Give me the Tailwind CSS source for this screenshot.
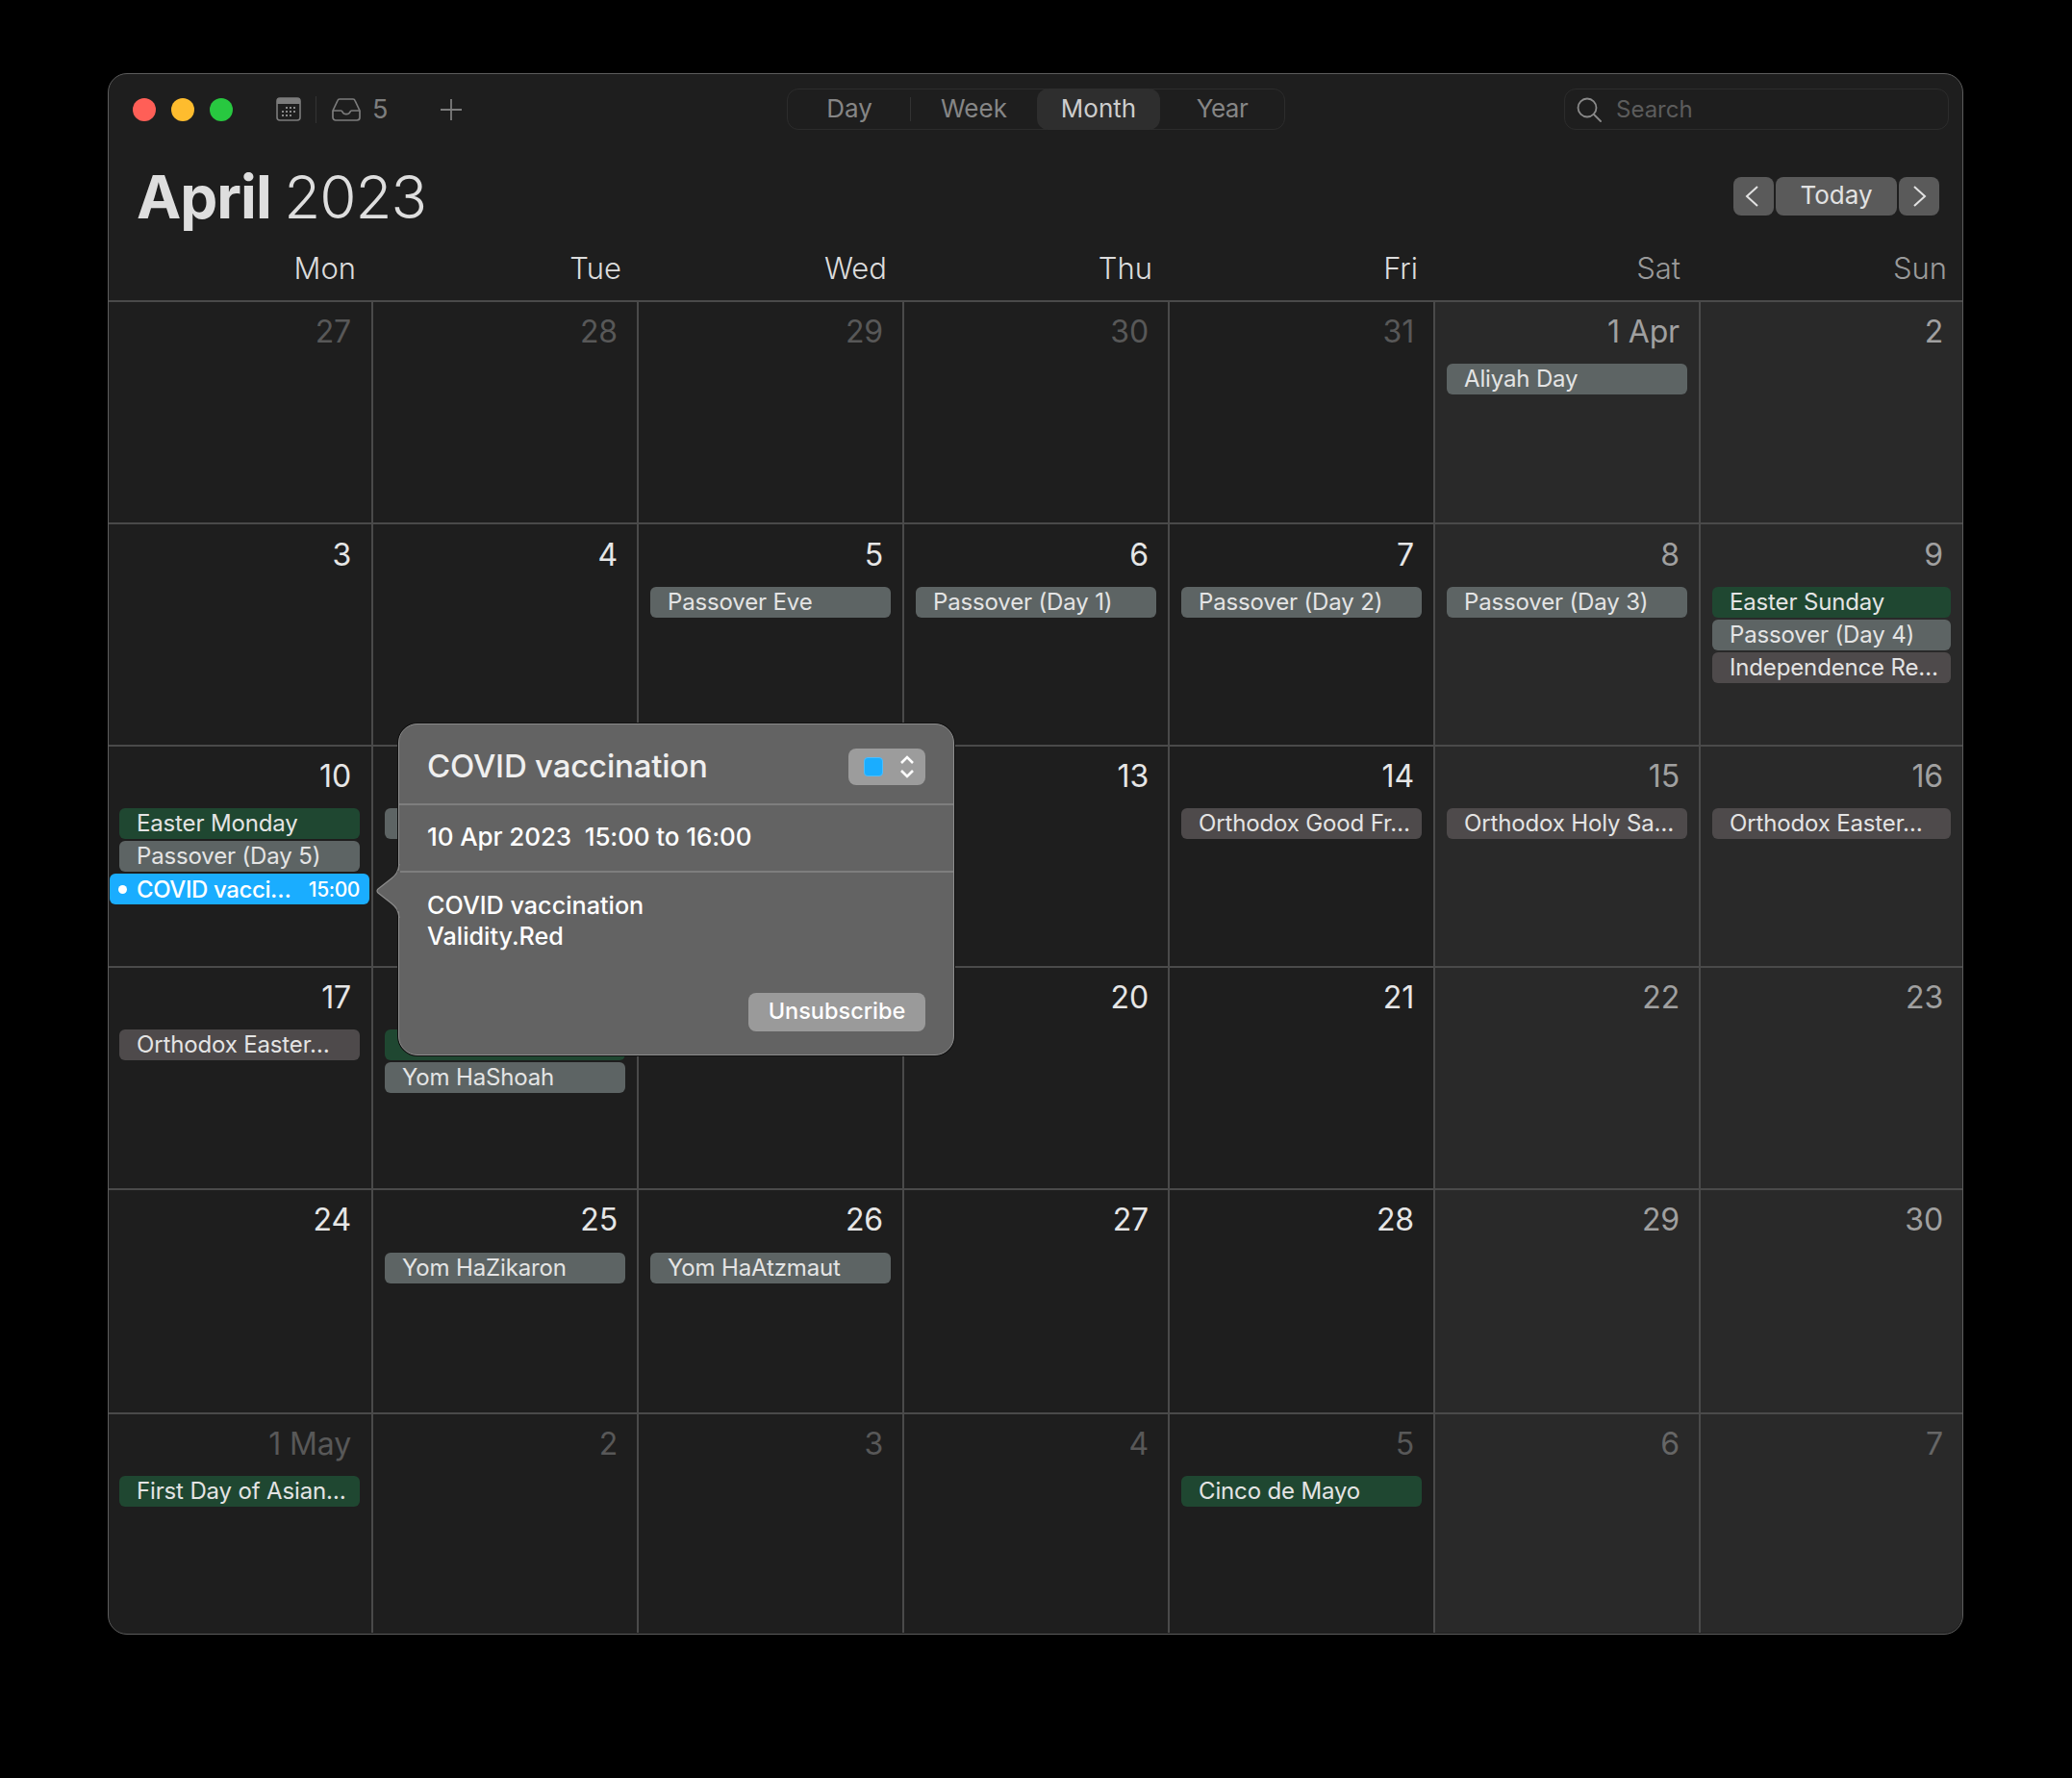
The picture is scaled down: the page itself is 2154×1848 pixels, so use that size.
<!DOCTYPE html>
<html>
<head>
    <meta charset="UTF-8">
    <title>Calendar</title>
    <script src="https://cdn.jsdelivr.net/npm/@tailwindcss/browser@4"></script>
</head>
<body class="bg-black min-h-screen pt-[76px] pl-[112px] [font-family:Inter,sans-serif]">
    <div class="relative w-[1929px] h-[1623px] bg-[#1e1e1e] border border-[#5c5c5c] rounded-[20px]">
        <!-- Toolbar -->
        <div class="grid grid-cols-[705px_518px_1fr] h-[73px] items-center">
            <div class="flex items-center pl-[25px]">
                <span class="w-6 h-6 rounded-full bg-[#ff5f57]"></span>
                <span class="w-6 h-6 rounded-full bg-[#febc2e] ml-4"></span>
                <span class="w-6 h-6 rounded-full bg-[#28c840] ml-4"></span>
                <svg class="ml-[45px]" width="26" height="25" viewBox="0 0 26 25">
                    <rect x="1" y="1" width="24" height="23" rx="3" fill="none" stroke="#7c7c7c" stroke-width="1.6"/>
                    <path d="M1 4a3 3 0 0 1 3-3h18a3 3 0 0 1 3 3v3H1z" fill="#7c7c7c"/>
                    <g fill="#8a8a8a">
                        <rect x="10" y="10" width="2" height="2"/><rect x="14" y="10" width="2" height="2"/><rect x="18" y="10" width="2" height="2"/>
                        <rect x="6" y="14" width="2" height="2"/><rect x="10" y="14" width="2" height="2"/><rect x="14" y="14" width="2" height="2"/><rect x="18" y="14" width="2" height="2"/>
                        <rect x="6" y="18" width="2" height="2"/><rect x="10" y="18" width="2" height="2"/><rect x="14" y="18" width="2" height="2"/>
                    </g>
                </svg>
                <span class="w-px h-7 bg-[#333] ml-[15px]"></span>
                <svg class="ml-[16px]" width="30" height="24" viewBox="0 0 30 24" fill="none" stroke="#7c7c7c" stroke-width="1.7" stroke-linejoin="round">
                    <path d="M1 13 6 2.500Q6.500 1 8 1h14q1.500 0 2 1.500L29 13v7a3 3 0 0 1-3 3H4a3 3 0 0 1-3-3z"/>
                    <path d="M1 13h8.500c1 0 1.200 .6 1.500 1.300.6 1.500 2 2.400 4 2.400s3.400-.9 4-2.400c.3-.7 .5-1.300 1.500-1.300H29"/>
                </svg>
                <span class="ml-3 text-[27px] leading-none text-[#7e7e7e]">5</span>
                <svg class="ml-[55px]" width="22" height="22" viewBox="0 0 22 22" stroke="#7c7c7c" stroke-width="1.8"><path d="M11 0v22M0 11h22"/></svg>
            </div>
            <div class="flex h-[43px] border border-[#2c2c2c] rounded-xl text-[26px] leading-[39px] text-center text-[#868686]">
                <span class="w-[128px] relative">Day<span class="absolute right-0 top-2 w-px h-[25px] bg-[#333]"></span></span>
                <span class="w-[131px]">Week</span>
                <span class="w-[128px] bg-[#2e2e2e] rounded-xl text-[#cdcdcd] -my-px leading-[41px]">Month</span>
                <span class="flex-1 tracking-[-0.5px]">Year</span>
            </div>
            <div class="flex justify-end pr-[14px]">
                <div class="flex items-center w-[400px] h-[43px] border border-[#2c2c2c] rounded-xl pl-[12px] text-[24px] text-[#5c5c5c]">
                    <svg width="26" height="26" viewBox="0 0 26 26" fill="none" stroke="#8a8a8a" stroke-width="1.8" stroke-linecap="round"><circle cx="11" cy="11" r="9.500"/><path d="m18 18 7 7"/></svg>
                    <span class="ml-[15px]">Search</span>
                </div>
            </div>
        </div>

        <!-- Title -->
        <div class="flex items-start justify-between h-[108px]">
            <h1 class="pl-[29px] pt-[17px] text-[62px] leading-[76px] text-[#dedede] font-light tracking-[-1px] [word-spacing:-3px]"><b class="font-bold">April</b> 2023</h1>
            <div class="flex gap-[2px] mt-[34px] mr-[24px] text-[26px] text-[#e2e2e2]">
                <span class="flex items-center justify-center w-[42px] h-10 rounded-lg bg-[#5a5a5a] pr-[4px]"><svg width="14" height="22" viewBox="0 0 14 22" fill="none" stroke="#e2e2e2" stroke-width="2"><path d="M13 1 2 11l11 10"/></svg></span>
                <span class="w-[126px] h-10 rounded-lg bg-[#5a5a5a] text-center leading-[38px]">Today</span>
                <span class="flex items-center justify-center w-[42px] h-10 rounded-lg bg-[#5a5a5a] pl-[2px]"><svg width="14" height="22" viewBox="0 0 14 22" fill="none" stroke="#e2e2e2" stroke-width="2"><path d="m1 1 11 10L1 21"/></svg></span>
            </div>
        </div>

        <!-- Weekdays -->
        <div class="grid grid-cols-[273px_repeat(5,276px)_274px] h-[54px] text-right text-[31px] font-light leading-[42px] text-[#dcdcdc]">
            <div class="pr-[16px]">Mon</div>
            <div class="pr-[16px]">Tue</div>
            <div class="pr-[16px]">Wed</div>
            <div class="pr-[16px]">Thu</div>
            <div class="pr-[16px]">Fri</div>
            <div class="pr-[19px] text-[#9a9a9a]">Sat</div>
            <div class="pr-[16px] text-[#9a9a9a]">Sun</div>
        </div>

        <!-- Month grid -->
        <div class="grid grid-cols-[273px_repeat(5,276px)_274px] grid-rows-[231px_231px_230px_231px_233px_229px] text-[32px] leading-[62px] tracking-[-0.15px] text-right text-[#e6e6e6] overflow-hidden rounded-b-[19px]">
            <!-- Week 1 -->
            <div class="border-t-2 border-[#4a4a4a] pr-[21px] text-[#585858]"><p class="h-[64px]">27</p></div>
            <div class="border-t-2 border-l-2 border-[#4a4a4a] pr-[20px] text-[#585858]"><p class="h-[64px]">28</p></div>
            <div class="border-t-2 border-l-2 border-[#4a4a4a] pr-[20px] text-[#585858]"><p class="h-[64px]">29</p></div>
            <div class="border-t-2 border-l-2 border-[#4a4a4a] pr-[20px] text-[#585858]"><p class="h-[64px]">30</p></div>
            <div class="border-t-2 border-l-2 border-[#4a4a4a] pr-[20px] text-[#585858]"><p class="h-[64px]">31</p></div>
            <div class="border-t-2 border-l-2 border-[#4a4a4a] pr-[20px] bg-[#292929] text-[#a0a0a0]"><p class="h-[64px]">1 Apr</p>
                <div class="-mr-[8px] ml-[12px] h-8 rounded-md bg-[#5d6464] text-left text-[24px] leading-[31px] text-[#e4e4e4] pl-[18px]">Aliyah Day</div>
            </div>
            <div class="border-t-2 border-l-2 border-[#4a4a4a] pr-[20px] bg-[#292929] text-[#a0a0a0]"><p class="h-[64px]">2</p></div>

            <!-- Week 2 -->
            <div class="border-t-2 border-[#4a4a4a] pr-[21px]"><p class="h-[64px] leading-[64px]">3</p></div>
            <div class="border-t-2 border-l-2 border-[#4a4a4a] pr-[20px]"><p class="h-[64px] leading-[64px]">4</p></div>
            <div class="border-t-2 border-l-2 border-[#4a4a4a] pr-[20px]"><p class="h-[65px] leading-[64px]">5</p>
                <div class="-mr-[8px] ml-[12px] h-8 rounded-md bg-[#5d6464] text-left text-[24px] leading-[31px] text-[#e4e4e4] pl-[18px]">Passover Eve</div>
            </div>
            <div class="border-t-2 border-l-2 border-[#4a4a4a] pr-[20px]"><p class="h-[65px] leading-[64px]">6</p>
                <div class="-mr-[8px] ml-[12px] h-8 rounded-md bg-[#5d6464] text-left text-[24px] leading-[31px] text-[#e4e4e4] pl-[18px]">Passover (Day 1)</div>
            </div>
            <div class="border-t-2 border-l-2 border-[#4a4a4a] pr-[20px]"><p class="h-[65px] leading-[64px]">7</p>
                <div class="-mr-[8px] ml-[12px] h-8 rounded-md bg-[#5d6464] text-left text-[24px] leading-[31px] text-[#e4e4e4] pl-[18px]">Passover (Day 2)</div>
            </div>
            <div class="border-t-2 border-l-2 border-[#4a4a4a] pr-[20px] bg-[#292929] text-[#a0a0a0]"><p class="h-[65px] leading-[64px]">8</p>
                <div class="-mr-[8px] ml-[12px] h-8 rounded-md bg-[#5d6464] text-left text-[24px] leading-[31px] text-[#e4e4e4] pl-[18px]">Passover (Day 3)</div>
            </div>
            <div class="border-t-2 border-l-2 border-[#4a4a4a] pr-[20px] bg-[#292929] text-[#a0a0a0]"><p class="h-[65px] leading-[64px]">9</p>
                <div class="flex flex-col gap-[2px] -mr-[8px] ml-[12px] text-left text-[24px] leading-[31px] text-[#e4e4e4]">
                    <div class="h-8 rounded-md bg-[#1f4731] pl-[18px]">Easter Sunday</div>
                    <div class="h-8 rounded-md bg-[#5d6464] pl-[18px]">Passover (Day 4)</div>
                    <div class="h-8 rounded-md bg-[#4e4a4b] pl-[18px]">Independence Re…</div>
                </div>
            </div>

            <!-- Week 3 -->
            <div class="border-t-2 border-[#4a4a4a] pr-[21px]"><p class="h-[64px]">10</p>
                <div class="flex flex-col gap-[2px] -mr-[9px] ml-[11px] text-left text-[24px] leading-[31px] text-[#e4e4e4]">
                    <div class="h-8 rounded-md bg-[#1f4731] pl-[18px]">Easter Monday</div>
                    <div class="h-8 rounded-md bg-[#5d6464] pl-[18px]">Passover (Day 5)</div>
                    <div class="flex items-center justify-between h-8 rounded-md bg-[#1aadff] text-white font-medium tracking-[-0.4px] -ml-[10px] -mr-[10px] pl-[9px] pr-[10px]">
                        <span class="flex items-center"><span class="w-[9px] h-[9px] rounded-full bg-white mr-[10px]"></span>COVID vacci…</span>
                        <span class="text-[21px]">15:00</span>
                    </div>
                </div>
            </div>
            <div class="border-t-2 border-l-2 border-[#4a4a4a] pr-[20px]"><div class="h-[64px]"></div>
                <div class="-mr-[8px] ml-[12px] h-8 rounded-md bg-[#5d6464]"></div>
            </div>
            <div class="border-t-2 border-l-2 border-[#4a4a4a] pr-[20px]"></div>
            <div class="border-t-2 border-l-2 border-[#4a4a4a] pr-[20px]"><p class="h-[64px]">13</p></div>
            <div class="border-t-2 border-l-2 border-[#4a4a4a] pr-[20px]"><p class="h-[64px]">14</p>
                <div class="-mr-[8px] ml-[12px] h-8 rounded-md bg-[#4e4a4b] text-left text-[24px] leading-[31px] text-[#e4e4e4] pl-[18px]">Orthodox Good Fr…</div>
            </div>
            <div class="border-t-2 border-l-2 border-[#4a4a4a] pr-[20px] bg-[#292929] text-[#a0a0a0]"><p class="h-[64px]">15</p>
                <div class="-mr-[8px] ml-[12px] h-8 rounded-md bg-[#4e4a4b] text-left text-[24px] leading-[31px] text-[#e4e4e4] pl-[18px]">Orthodox Holy Sa…</div>
            </div>
            <div class="border-t-2 border-l-2 border-[#4a4a4a] pr-[20px] bg-[#292929] text-[#a0a0a0]"><p class="h-[64px]">16</p>
                <div class="-mr-[8px] ml-[12px] h-8 rounded-md bg-[#4e4a4b] text-left text-[24px] leading-[31px] text-[#e4e4e4] pl-[18px]">Orthodox Easter…</div>
            </div>

            <!-- Week 4 -->
            <div class="border-t-2 border-[#4a4a4a] pr-[21px]"><p class="h-[64px]">17</p>
                <div class="-mr-[9px] ml-[11px] h-8 rounded-md bg-[#4e4a4b] text-left text-[24px] leading-[31px] text-[#e4e4e4] pl-[18px]">Orthodox Easter…</div>
            </div>
            <div class="border-t-2 border-l-2 border-[#4a4a4a] pr-[20px]"><div class="h-[64px]"></div>
                <div class="flex flex-col gap-[2px] -mr-[8px] ml-[12px] text-left text-[24px] leading-[31px] text-[#e4e4e4]">
                    <div class="h-8 rounded-md bg-[#1f4731]"></div>
                    <div class="h-8 rounded-md bg-[#5d6464] pl-[18px]">Yom HaShoah</div>
                </div>
            </div>
            <div class="border-t-2 border-l-2 border-[#4a4a4a] pr-[20px]"></div>
            <div class="border-t-2 border-l-2 border-[#4a4a4a] pr-[20px]"><p class="h-[64px]">20</p></div>
            <div class="border-t-2 border-l-2 border-[#4a4a4a] pr-[20px]"><p class="h-[64px]">21</p></div>
            <div class="border-t-2 border-l-2 border-[#4a4a4a] pr-[20px] bg-[#292929] text-[#a0a0a0]"><p class="h-[64px]">22</p></div>
            <div class="border-t-2 border-l-2 border-[#4a4a4a] pr-[20px] bg-[#292929] text-[#a0a0a0]"><p class="h-[64px]">23</p></div>

            <!-- Week 5 -->
            <div class="border-t-2 border-[#4a4a4a] pr-[21px]"><p class="h-[64px]">24</p></div>
            <div class="border-t-2 border-l-2 border-[#4a4a4a] pr-[20px]"><p class="h-[65px]">25</p>
                <div class="-mr-[8px] ml-[12px] h-8 rounded-md bg-[#5d6464] text-left text-[24px] leading-[31px] text-[#e4e4e4] pl-[18px]">Yom HaZikaron</div>
            </div>
            <div class="border-t-2 border-l-2 border-[#4a4a4a] pr-[20px]"><p class="h-[65px]">26</p>
                <div class="-mr-[8px] ml-[12px] h-8 rounded-md bg-[#5d6464] text-left text-[24px] leading-[31px] text-[#e4e4e4] pl-[18px]">Yom HaAtzmaut</div>
            </div>
            <div class="border-t-2 border-l-2 border-[#4a4a4a] pr-[20px]"><p class="h-[64px]">27</p></div>
            <div class="border-t-2 border-l-2 border-[#4a4a4a] pr-[20px]"><p class="h-[64px]">28</p></div>
            <div class="border-t-2 border-l-2 border-[#4a4a4a] pr-[20px] bg-[#292929] text-[#a0a0a0]"><p class="h-[64px]">29</p></div>
            <div class="border-t-2 border-l-2 border-[#4a4a4a] pr-[20px] bg-[#292929] text-[#a0a0a0]"><p class="h-[64px]">30</p></div>

            <!-- Week 6 -->
            <div class="border-t-2 border-[#4a4a4a] pr-[21px] text-[#585858]"><p class="h-[64px]">1 May</p>
                <div class="-mr-[9px] ml-[11px] h-8 rounded-md bg-[#1f4731] text-left text-[24px] leading-[31px] text-[#e4e4e4] pl-[18px]">First Day of Asian…</div>
            </div>
            <div class="border-t-2 border-l-2 border-[#4a4a4a] pr-[20px] text-[#585858]"><p class="h-[64px]">2</p></div>
            <div class="border-t-2 border-l-2 border-[#4a4a4a] pr-[20px] text-[#585858]"><p class="h-[64px]">3</p></div>
            <div class="border-t-2 border-l-2 border-[#4a4a4a] pr-[20px] text-[#585858]"><p class="h-[64px]">4</p></div>
            <div class="border-t-2 border-l-2 border-[#4a4a4a] pr-[20px] text-[#585858]"><p class="h-[64px]">5</p>
                <div class="-mr-[8px] ml-[12px] h-8 rounded-md bg-[#1f4731] text-left text-[24px] leading-[31px] text-[#e4e4e4] pl-[18px]">Cinco de Mayo</div>
            </div>
            <div class="border-t-2 border-l-2 border-[#4a4a4a] pr-[20px] bg-[#292929] text-[#666666]"><p class="h-[64px]">6</p></div>
            <div class="border-t-2 border-l-2 border-[#4a4a4a] pr-[20px] bg-[#292929] text-[#666666]"><p class="h-[64px]">7</p></div>
        </div>

        <!-- Event popover -->
        <div class="absolute left-[301px] top-[675px] w-[578px] h-[345px] flex flex-col bg-[#636363] border border-[#8c8c8c] rounded-[20px] shadow-[0_0_0_1px_#111] text-white">
            <svg class="absolute left-[-24px] top-[145px]" width="26" height="56" viewBox="0 0 26 56">
                <path d="M25 0C24 8 21 11 16 15L2 26q-2 2 0 4l14 11c5 4 8 7 9 15z" fill="#636363"/>
                <path d="M24 0C23 8 21 11 16 15L2 26q-2 2 0 4l14 11c5 4 7 7 8 15" fill="none" stroke="#8c8c8c" stroke-width="1.200"/>
            </svg>
            <div class="flex items-center justify-between h-[84px] pt-[6px] pl-[29px] pr-[29px] border-b-2 border-[#7e7e7e]">
                <span class="text-[33px] font-medium tracking-[-0.2px] text-[#efefef]">COVID vaccination</span>
                <span class="flex items-center w-[80px] h-[38px] rounded-lg bg-[#9c9c9c] pl-4">
                    <span class="w-[20px] h-[20px] rounded-[4px] bg-[#1aadff] border border-[#4dbdff]"></span>
                    <svg class="ml-[17px]" width="16" height="24" viewBox="0 0 16 24" fill="none" stroke="#fff" stroke-width="2.600"><path d="m2 8 6-6 6 6M2 16l6 6 6-6"/></svg>
                </span>
            </div>
            <div class="flex items-center h-[70px] pl-[29px] pb-[3px] border-b-2 border-[#7e7e7e] text-[26px] font-medium tracking-[-0.1px] whitespace-pre">10 Apr 2023  15:00 to 16:00</div>
            <div class="flex flex-col flex-1 pl-[29px] pr-[29px] pt-[18px] pb-[24px] text-[25.2px] leading-[32px] font-medium">
                <p>COVID vaccination</p>
                <p>Validity.Red</p>
                <span class="self-end mt-auto w-[184px] h-10 rounded-lg bg-[#9a9a9a] text-center text-[23.5px] leading-[38px]">Unsubscribe</span>
            </div>
        </div>
    </div>
</body>
</html>
